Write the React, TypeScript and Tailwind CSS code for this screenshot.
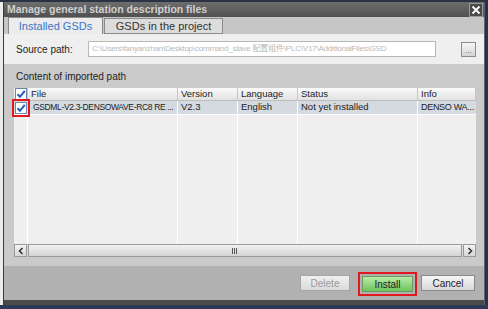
import React from "react";

const Check = () => (
  <svg width="12" height="12" viewBox="0 0 12 12">
    <rect x="0.5" y="0.5" width="11" height="11" fill="#ffffff" stroke="#6b87b0" />
    <path d="M2.5 6.2 L5 8.8 L9.8 2.8" stroke="#1f5fb8" strokeWidth="2" fill="none" />
  </svg>
);

const cols = [
  { w: "w-[150px]", label: "File" },
  { w: "w-[60px]", label: "Version" },
  { w: "w-[60px]", label: "Language" },
  { w: "w-[120px]", label: "Status" },
  { w: "w-[58px]", label: "Info" },
];

export default function App() {
  const font = { fontFamily: '"Liberation Sans", Arial, "Noto Sans CJK SC", sans-serif' };
  return (
    <div className="w-[488px] h-[309px] bg-[#27324a] flex flex-col overflow-hidden" style={font}>
      <div className="h-[2px] bg-[#2a3243]" />
      <div className="flex h-[303px]">
        <div className="w-[3px] bg-[#ececec]" />
        <div className="w-[481px] flex flex-col border-l border-[#3a3a3a]">
          {/* title bar */}
          <div className="h-[15px] flex items-center justify-between bg-gradient-to-b from-[#6e6e6e] to-[#505050]">
            <span className="pl-[3px] text-[10.5px] font-bold text-[#d0d0d0] leading-none">
              Manage general station description files
            </span>
            <div className="w-[14px] h-[14px] mr-[1px] border border-[#9a9a9a] bg-[#4a4a4a] flex items-center justify-center">
              <svg width="10" height="10" viewBox="0 0 10 10">
                <path d="M1.5 1.5 L8.5 8.5 M8.5 1.5 L1.5 8.5" stroke="#ffffff" strokeWidth="1.8" />
              </svg>
            </div>
          </div>
          {/* tabs */}
          <div className="h-[17px] flex items-end bg-[#c6c6c6] pl-[4px]">
            <div className="h-[17px] w-[95px] bg-[#ececec] border-l border-t border-r border-[#8a8a8a] flex items-center justify-center text-[11px] text-[#3b74c4]">
              Installed GSDs
            </div>
            <div className="h-[16px] w-[119px] ml-[1px] bg-[#dcdcdc] border border-[#8a8a8a] flex items-center justify-center text-[11px] text-[#333]">
              GSDs in the project
            </div>
          </div>
          {/* source path */}
          <div className="h-[30px] bg-[#efefef] flex items-center pl-[12px]">
            <span className="w-[72px] text-[10px] text-[#222]">Source path:</span>
            <div className="w-[348px] h-[16px] bg-white border border-[#b8b8b8] flex items-center px-[3px] overflow-hidden whitespace-nowrap text-[8px] tracking-[-0.2px] text-[#b8b8b8]">
              C:\Users\fanyanzhan\Desktop\command_slave 配置组件\PLC\V17\AdditionalFiles\GSD
            </div>
            <div className="ml-[25px] w-[15px] h-[15px] border border-[#8c8c8c] bg-gradient-to-b from-[#f6f6f6] to-[#d4d4d4] flex items-end justify-center text-[8px] leading-[10px] text-[#555]">
              ...
            </div>
          </div>
          {/* panel */}
          <div className="flex-1 flex flex-col bg-[#cacaca]">
            <div className="h-[24px] flex items-center pl-[12px] text-[10px] text-[#222]">
              Content of imported path
            </div>
            <div className="ml-[10px] w-[462px] flex flex-col">
              {/* header */}
              <div className="h-[13px] flex bg-gradient-to-b from-[#fafafa] to-[#e2e2e2] border-b border-[#bdbdbd] text-[9.5px] text-[#222]">
                <div className="w-[14px] flex items-center justify-center border-r border-[#c6c6c6]">
                  <Check />
                </div>
                {cols.map((c) => (
                  <div key={c.label} className={`${c.w} border-r border-[#c6c6c6] pl-[3px] flex items-center leading-none`}>
                    {c.label}
                  </div>
                ))}
              </div>
              {/* data row */}
              <div className="h-[14px] flex bg-[#d5dae0] text-[9.5px] text-[#222] border-b border-white">
                <div className="w-[14px] flex items-center justify-center relative">
                  <Check />
                  <div className="absolute left-[-2px] top-[-2px] w-[18px] h-[18px] border-2 border-[#e0191e]" />
                </div>
                <div className="w-[150px] pl-[5px] flex items-center whitespace-nowrap overflow-hidden text-[8.5px] tracking-[-0.35px] border-r border-white">GSDML-V2.3-DENSOWAVE-RC8 RE ...</div>
                <div className="w-[60px] pl-[3px] flex items-center border-r border-white">V2.3</div>
                <div className="w-[60px] pl-[3px] flex items-center border-r border-white">English</div>
                <div className="w-[120px] pl-[3px] flex items-center border-r border-white">Not yet installed</div>
                <div className="w-[58px] pl-[3px] flex items-center whitespace-nowrap overflow-hidden text-[9px] tracking-[-0.3px]">DENSO WA...</div>
              </div>
              {/* empty area */}
              <div className="h-[129px] flex bg-[#efefef]">
                <div className="w-[14px] border-r border-white" />
                <div className="w-[150px] border-r border-white" />
                <div className="w-[60px] border-r border-white" />
                <div className="w-[60px] border-r border-white" />
                <div className="w-[120px] border-r border-white" />
                <div className="w-[58px]" />
              </div>
              {/* scrollbar */}
              <div className="h-[13px] flex bg-[#d8d8d8]">
                <div className="w-[13px] h-[13px] border border-[#9a9a9a] bg-gradient-to-b from-[#f4f4f4] to-[#d6d6d6] flex items-center justify-center">
                  <svg width="6" height="8" viewBox="0 0 6 8"><path d="M4.5 1 L1.5 4 L4.5 7" stroke="#333" strokeWidth="1.6" fill="none" /></svg>
                </div>
                <div className="flex-1 ml-[1px] mr-[1px] border border-[#9a9a9a] bg-gradient-to-b from-[#f2f2f2] to-[#d4d4d4] flex items-center">
                  <div className="ml-[203px] flex gap-[1px]">
                    <div className="w-[1px] h-[6px] bg-[#555]" />
                    <div className="w-[1px] h-[6px] bg-[#555]" />
                    <div className="w-[1px] h-[6px] bg-[#555]" />
                  </div>
                </div>
                <div className="w-[13px] h-[13px] border border-[#9a9a9a] bg-gradient-to-b from-[#f4f4f4] to-[#d6d6d6] flex items-center justify-center">
                  <svg width="6" height="8" viewBox="0 0 6 8"><path d="M1.5 1 L4.5 4 L1.5 7" stroke="#333" strokeWidth="1.6" fill="none" /></svg>
                </div>
              </div>
            </div>
            <div className="h-[9px]" />
            {/* bottom buttons */}
            <div className="flex-1 bg-[#b1b1b1] flex items-start justify-end pt-[9px] pr-[9px]">
              <div className="w-[50px] h-[16px] border border-[#a6a6a6] bg-gradient-to-b from-[#f0f0f0] to-[#dadada] flex items-center justify-center text-[10px] text-[#9a9a9a]">
                Delete
              </div>
              <div className="ml-[8px] mt-[-3px] p-[2px] border-2 border-[#e0191e]">
                <div className="w-[51px] h-[16px] border border-[#6a9a60] bg-gradient-to-b from-[#b8eaa8] to-[#6cc45a] flex items-center justify-center text-[10px] text-[#222]">
                  Install
                </div>
              </div>
              <div className="ml-[4px] w-[54px] h-[16px] border border-[#8a8a8a] bg-gradient-to-b from-[#f6f6f6] to-[#d8d8d8] flex items-center justify-center text-[10px] text-[#222]">
                Cancel
              </div>
            </div>
            <div className="h-[5px] bg-[#4b4b4b]" />
          </div>
        </div>
        <div className="w-[4px] bg-[#27324a] border-l border-[#5a6478]" />
      </div>
      <div className="flex-1 bg-[#2c3a58]" />
    </div>
  );
}
